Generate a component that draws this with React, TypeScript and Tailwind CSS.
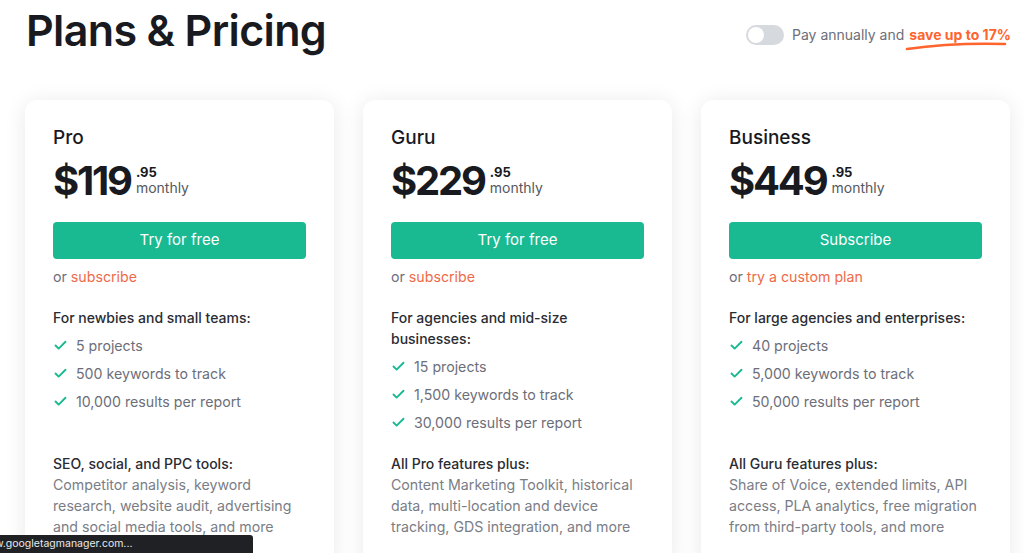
import { Check } from "lucide-react";

type Plan = {
  name: string;
  price: string;
  cta: string;
  altText: string;
  audience: string;
  limits: string[];
  toolsTitle: string;
  tools: string;
};

const plans: Plan[] = [
  {
    name: "Pro",
    price: "$119",
    cta: "Try for free",
    altText: "subscribe",
    audience: "For newbies and small teams:",
    limits: ["5 projects", "500 keywords to track", "10,000 results per report"],
    toolsTitle: "SEO, social, and PPC tools:",
    tools:
      "Competitor analysis, keyword research, website audit, advertising and social media tools, and more",
  },
  {
    name: "Guru",
    price: "$229",
    cta: "Try for free",
    altText: "subscribe",
    audience: "For agencies and mid-size businesses:",
    limits: ["15 projects", "1,500 keywords to track", "30,000 results per report"],
    toolsTitle: "All Pro features plus:",
    tools:
      "Content Marketing Toolkit, historical data, multi-location and device tracking, GDS integration, and more",
  },
  {
    name: "Business",
    price: "$449",
    cta: "Subscribe",
    altText: "try a custom plan",
    audience: "For large agencies and enterprises:",
    limits: ["40 projects", "5,000 keywords to track", "50,000 results per report"],
    toolsTitle: "All Guru features plus:",
    tools:
      "Share of Voice, extended limits, API access, PLA analytics, free migration from third-party tools, and more",
  },
];

function PlanCard({ plan }: { plan: Plan }) {
  return (
    <div className="w-[309px] shrink-0 rounded-[12px] bg-white pl-7 pr-5 pt-7 pb-8 shadow-[0_2px_22px_rgba(20,20,40,0.09)]">
      <h3 className="text-[19px] leading-[20px] font-medium text-[#181a1f]">{plan.name}</h3>

      <div className="mt-[10px] flex items-center">
        <span className="text-[40px] leading-[46px] font-bold tracking-[-0.055em] text-[#181a1f]">
          {plan.price}
        </span>
        <div className="ml-[5px] flex flex-col">
          <span className="text-[13px] leading-[14px] font-bold text-[#181a1f]">.95</span>
          <span className="text-[14px] leading-[18px] text-[#555860]">monthly</span>
        </div>
      </div>

      <button className="mt-[18px] h-[37px] w-[253px] rounded-[4px] bg-[#19b991] text-[15px] text-white">
        {plan.cta}
      </button>

      <p className="mt-[8px] text-[14.2px] leading-[20px] text-[#6c6e79]">
        or <span className="text-[#ef6a48]">{plan.altText}</span>
      </p>

      <div className="mt-[20px] h-[146px] pr-2">
        <p className="text-[14px] leading-[21px] font-medium text-[#2a2c33]">{plan.audience}</p>
        <ul className="mt-[7px] flex flex-col gap-[7px]">
          {plan.limits.map((item) => (
            <li key={item} className="flex items-center text-[14.2px] leading-[21px] text-[#6c6e79]">
              <Check className="mr-[8px] h-[15px] w-[15px] text-[#19b991]" strokeWidth={3} />
              {item}
            </li>
          ))}
        </ul>
      </div>

      <p className="text-[14px] leading-[21px] font-medium text-[#2a2c33]">{plan.toolsTitle}</p>
      <p className="text-[14.2px] leading-[21px] text-[#7a7d86]">{plan.tools}</p>
    </div>
  );
}

export default function App() {
  return (
    <div className="relative h-[553px] w-[1024px] overflow-hidden bg-white font-['Inter',sans-serif]">
      <div className="flex items-start justify-between pl-[26px] pr-[13px] pt-[2px]">
        <h1 className="text-[43px] leading-[56px] font-semibold tracking-[-0.015em] text-[#181a1f]">
          Plans &amp; Pricing
        </h1>
        <div className="mt-[22px] flex items-center">
          <span className="flex h-[20px] w-[38px] items-center rounded-full bg-[#d6d9de] px-[2px]">
            <span className="h-[16px] w-[16px] rounded-full bg-white" />
          </span>
          <span className="ml-[8px] text-[14px] text-[#6c6e79]">Pay annually and</span>
          <span className="relative ml-[5px] text-[14px] font-bold text-[#ff642d]">
            save up to 17%
            <svg
              className="absolute -left-[4px] top-[17px]"
              width="104"
              height="10"
              viewBox="0 0 104 10"
              fill="none"
            >
              <path
                d="M2 8 C 30 4, 65 2, 100 3"
                stroke="#ff642d"
                strokeWidth="2.6"
                strokeLinecap="round"
              />
            </svg>
          </span>
        </div>
      </div>

      <div className="mt-[42px] flex gap-[29px] pl-[25px]">
        {plans.map((plan) => (
          <PlanCard key={plan.name} plan={plan} />
        ))}
      </div>

      <div className="absolute bottom-0 left-0 flex h-[18px] w-[253px] items-center overflow-hidden rounded-tr-[3px] bg-[#202124]">
        <span className="-ml-[5px] text-[10.5px] leading-none text-[#e8eaed]">
          w.googletagmanager.com...
        </span>
      </div>
    </div>
  );
}
